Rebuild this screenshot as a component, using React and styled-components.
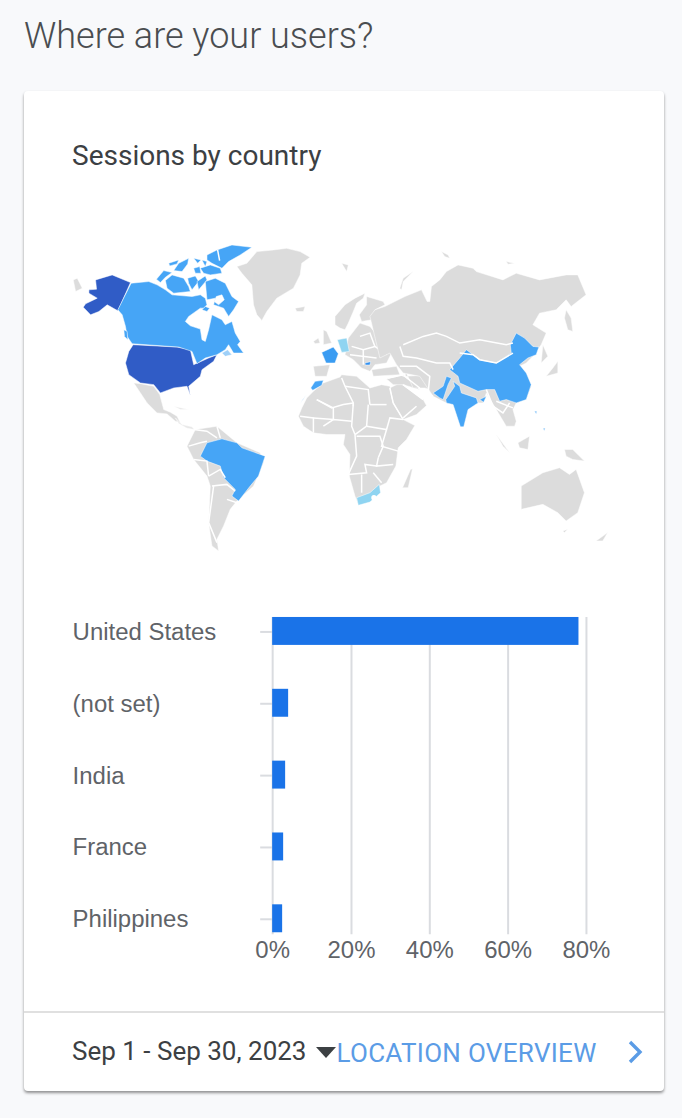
import styled, { createGlobalStyle } from "styled-components";

const Global = createGlobalStyle`
  html, body {
    margin: 0;
    background: #f8f9fb;
  }
`;

const GREY = "#dcdcdc";
const FAINT = "#e8e8e8";
const BLUE = "#46a5f6";
const DARK = "#305cc6";
const LIGHT = "#8fd4f1";
const WHITE = "#fff";

// the map is traced at 3x, each layer has its own origin on the page
const layers = [
  {
    x: 60,
    y: 230,
    shapes: [
      [GREY, "38,150 50,145 65,175 45,185"],
      [DARK, "105,150 155,135 210,158 172,243 140,225 115,245 90,255 68,232 75,222 110,205 85,190 85,180 108,178"],
      [DARK, "218,345 350,352 390,360 400,405 445,385 470,375 460,395 425,420 420,440 385,470 390,498 380,470 340,475 300,490 280,465 240,460 205,435 195,400 205,365"],
      [GREY, "220,460 240,462 280,470 298,495 310,540 330,548 350,560 360,580 345,575 320,553 290,550 260,520 240,490"],
      [FAINT, "345,565 365,585 395,592 402,600 380,596 355,582"],
      [FAINT, "340,530 385,540 360,540"],
      [GREY, "530,110 560,100 590,65 640,60 680,55 720,65 750,82 725,100 720,135 700,175 650,205 620,245 605,272 590,255 580,225 575,165 545,130"],
      [GREY, "705,235 735,230 730,245 710,245"],
      [GREY, "405,600 470,590 530,640 600,670 610,700 580,770 530,815 510,840 490,890 470,930 475,965 455,950 445,880 450,770 440,740 400,690 380,650"],
      [BLUE, "440,640 485,628 530,640 545,655 615,680 595,740 570,770 535,815 515,800 525,780 490,745 480,710 440,695 420,680"],
      [GREY, "760,410 810,405 800,440 765,440"],
      [GREY, "760,335 775,325 780,340 765,342"],
      [GREY, "790,300 800,305 815,340 790,345"],
      ["#3a9cf2", "785,368 820,352 835,372 825,400 798,400"],
    ],
    lines: [
      "385,650 420,640 440,635",
      "400,690 440,695 445,740",
      "445,740 480,720 495,745",
      "455,770 500,765 525,785",
      "460,770 445,880 470,940",
      "500,810 530,820",
      "400,600 440,605 470,625",
      "470,590 480,625",
    ],
  },
  {
    x: 110,
    y: 240,
    shapes: [
      [BLUE, "62,130 115,125 140,135 165,150 185,165 245,170 270,165 285,175 290,195 280,205 270,205 235,230 225,245 240,258 270,268 275,300 285,305 295,270 305,225 335,240 345,255 365,245 375,280 390,305 382,315 400,340 370,340 355,315 345,330 320,345 285,355 260,372 245,335 205,322 65,312 50,290 45,260 35,225 22,210"],
      [BLUE, "290,45 320,30 365,15 425,22 390,45 355,65 335,85 305,70 290,60"],
      [BLUE, "175,70 205,60 200,72 178,78"],
      [BLUE, "205,70 235,55 232,72 215,95 190,92"],
      [BLUE, "250,55 272,60 262,70"],
      [BLUE, "250,85 268,80 272,100 255,100"],
      [BLUE, "275,60 290,65 285,80"],
      [BLUE, "270,85 300,75 330,85 335,100 300,105 280,100"],
      [BLUE, "138,118 160,92 185,98 165,112 150,128"],
      [BLUE, "165,122 185,105 220,115 235,140 240,155 190,160 170,145"],
      [BLUE, "232,115 255,108 265,125 245,150 235,130"],
      [BLUE, "260,125 285,108 290,120 265,150"],
      [BLUE, "285,125 315,115 345,130 365,170 385,185 370,210 355,230 340,205 310,195 315,175 290,180"],
      [BLUE, "285,200 298,205 290,215 275,210"],
      [BLUE, "40,270 50,275 52,300 42,290"],
      [WHITE, "318,170 335,165 342,180 325,195 312,185"],
      ["#9fd0f8", "335,340 352,330 365,345 345,350"],
    ],
    lines: ["322,30 328,62"],
  },
  {
    x: 290,
    y: 320,
    shapes: [
      [GREY, "25,290 35,265 50,235 70,215 100,190 150,172 155,165 200,170 240,205 275,195 300,200 310,250 340,300 375,318 350,360 325,385 318,440 290,490 270,500 270,520 240,545 205,555 195,530 178,470 180,405 160,375 165,345 110,345 70,340 40,320"],
      [GREY, "300,205 330,190 400,240 410,258 380,285 340,300 310,250"],
      [GREY, "245,150 320,140 330,165 250,170"],
      [GREY, "290,178 340,165 390,210 340,195 310,195"],
      [GREY, "345,150 345,170 430,165 440,215 405,205 370,205"],
      [GREY, "335,85 350,120 400,115 450,135 475,150 465,170 430,215 440,165 345,150"],
      [BLUE, "62,205 75,185 100,182 95,197 68,212"],
      [BLUE, "30,252 50,225 38,240"],
      [GREY, "338,505 362,450 368,448 355,505"],
      [LIGHT, "200,535 240,520 268,495 272,520 240,548 205,558"],
    ],
    lines: [
      "155,175 165,200 190,250 190,260",
      "80,240 125,265 160,255 190,250",
      "165,200 235,210 240,255",
      "240,255 290,255",
      "235,255 230,320",
      "190,250 185,320 195,345",
      "80,240 130,265 130,300 70,295",
      "30,290 70,295 70,340",
      "100,320 130,300 185,305",
      "230,320 290,330 300,295 340,300",
      "195,345 230,320",
      "195,345 200,410 175,465",
      "200,350 270,350 280,380 265,415",
      "290,330 275,380 325,395",
      "265,415 260,440 310,435",
      "175,465 230,460 225,435 260,440",
      "215,465 215,520",
      "250,460 275,490",
      "340,300 310,250 300,205",
      "345,170 345,150",
      "380,120 420,130 445,165 430,205",
      "330,165 345,170 390,205",
      "295,175 340,165",
      "340,195 400,240",
      "340,295 380,260",
    ],
    dots: [[252, 535, 8]],
  },
  {
    x: 320,
    y: 240,
    shapes: [
      [GREY, "45,230 75,195 105,175 135,160 130,175 110,190 100,215 85,250 75,270 60,265 45,255"],
      [GREY, "140,170 190,185 195,195 165,210 155,240 125,245 118,225 140,195"],
      [GREY, "65,70 85,75 80,95"],
      [GREY, "240,145 250,115 280,95 250,125 245,150"],
      [GREY, "365,35 385,45 390,55 375,50"],
      [GREY, "85,295 120,250 150,260 215,340 200,370 165,375 150,395 125,385 100,360 75,345"],
    ],
    lines: ["120,290 150,280 165,320 130,330 95,320", "130,330 130,375", "165,320 200,345", "90,345 170,355"],
  },
  {
    x: 340,
    y: 230,
    shapes: [
      [GREY, "90,260 105,240 135,230 195,200 245,180 262,215 270,215 275,170 300,150 320,125 355,105 400,115 410,125 490,150 530,130 600,150 680,135 715,135 740,195 695,230 680,210 650,240 600,250 580,285 620,310 605,345 580,380 560,400 540,410 560,430 575,470 560,510 530,520 520,540 530,575 525,590 500,590 470,540 440,490 430,520 410,520 385,540 372,592 340,525 320,520 280,500 240,440 190,430 170,405 150,370 120,385"],
      [GREY, "680,240 695,265 700,305 685,300 675,265"],
      [GREY, "620,440 640,415 655,395 655,430"],
      [GREY, "610,345 625,380 605,400"],
      [BLUE, "330,420 360,385 380,360 400,375 420,390 470,400 515,370 512,345 530,310 555,325 580,350 598,352 590,375 565,385 540,405 560,430 575,465 560,510 530,520 500,510 480,515 465,480 440,480 415,485 360,460 355,440"],
      [BLUE, "340,455 360,470 365,490 410,505 415,520 385,540 372,592 362,592 340,525 320,520 318,510 345,470"],
      [BLUE, "280,490 310,470 320,440 335,445 325,465 310,510 300,505"],
      [BLUE, "420,510 440,500 432,518"],
      ["#2f8ff0", "75,400 92,396 90,406 76,406"],
      [BLUE, "585,545 592,545 590,553"],
      [BLUE, "611,596 617,596 614,604"],
      [LIGHT, "-8,330 20,325 28,365 5,368"],
      [GREY, "545,770 610,730 660,715 690,735 710,720 735,790 715,850 680,875 655,850 610,825 545,840"],
      [GREY, "770,935 805,910 790,935"],
      [GREY, "670,905 685,900 675,910"],
      [GREY, "535,640 570,620 565,660 540,655"],
      [GREY, "675,660 700,660 735,695 700,690 680,680"],
      [GREY, "470,615 510,670 490,650"],
      [GREY, "500,95 525,100 505,103"],
    ],
    lines: [
      "190,345 250,320 290,310 320,320 360,340 420,330 500,345 520,340",
      "360,370 400,375 420,390 470,400 520,370",
      "180,350 190,380 230,385 290,400 330,400 340,420",
      "180,410 230,410 270,440 265,490 280,500",
      "440,480 460,530 490,550 510,520",
      "470,515 520,535",
    ],
  },
];

const countries = [
  { name: "United States", width: 307, top: 617 },
  { name: "(not set)", width: 16, top: 689 },
  { name: "India", width: 13, top: 761 },
  { name: "France", width: 11, top: 833 },
  { name: "Philippines", width: 10, top: 905 },
];

const axis = [
  { label: "0%", x: 272.5 },
  { label: "20%", x: 351.5 },
  { label: "40%", x: 430 },
  { label: "60%", x: 508.5 },
  { label: "80%", x: 587 },
];

function App() {
  return (
    <Page>
      <Global />
      <Title>Where are your users?</Title>
      <Card>
        <CardTitle>Sessions by country</CardTitle>
        <WorldMap viewBox="60 230 570 330">
          {layers.map((layer) => (
            <g key={layer.x} transform={`translate(${layer.x} ${layer.y}) scale(0.3333)`}>
              {layer.shapes.map(([fill, pts], i) => (
                <polygon key={i} points={pts} fill={fill} stroke="#fff" strokeWidth="1.5" />
              ))}
              {layer.lines.map((pts, i) => (
                <polyline key={i} points={pts} fill="none" stroke="#fff" strokeWidth="4.5" />
              ))}
              {layer.dots?.map(([cx, cy, r]) => (
                <circle key={cx} cx={cx} cy={cy} r={r} fill="#fff" />
              ))}
            </g>
          ))}
        </WorldMap>
        <Chart viewBox="24 605 640 370">
          {axis.map((a) => (
            <line key={a.label} x1={a.x} x2={a.x} y1="617" y2="935" stroke="#dadce0" strokeWidth="2" />
          ))}
          {countries.map((c) => (
            <g key={c.name}>
              <line x1="260" x2="272" y1={c.top + 15} y2={c.top + 15} stroke="#dadce0" strokeWidth="2" />
              <rect x="272" y={c.top} width={c.width} height="28" fill="#1a73e8" />
              <text x="72" y={c.top + 23}>{c.name}</text>
            </g>
          ))}
          {axis.map((a) => (
            <text key={a.label} x={a.x} y="959" textAnchor="middle">{a.label}</text>
          ))}
        </Chart>
        <Footer>
          <DateRange>Sep 1 - Sep 30, 2023</DateRange>
          <Caret />
          <OverviewLink>LOCATION OVERVIEW</OverviewLink>
          <Chevron viewBox="0 0 16 24">
            <polyline points="3,2 13,12 3,22" fill="none" stroke="#5b9ce6" strokeWidth="3.4" />
          </Chevron>
        </Footer>
      </Card>
    </Page>
  );
}

const Page = styled.div`
  height: 1118px;
  box-sizing: border-box;
  padding: 0 18px 0 24px;
  overflow: hidden;
`;

const Title = styled.h1`
  margin: 0;
  height: 91px;
  padding-top: 14px;
  box-sizing: border-box;
  font: 300 36px/44px Roboto, sans-serif;
  color: #4a4d50;
`;

const Card = styled.section`
  height: 1000px;
  background: #fff;
  border-radius: 4px;
  box-shadow: 0 2px 3px rgba(0, 0, 0, 0.42);
  display: flex;
  flex-direction: column;
`;

const CardTitle = styled.h2`
  margin: 0;
  height: 139px;
  padding: 46px 0 0 48px;
  box-sizing: border-box;
  font: 400 28px/38px Roboto, sans-serif;
  color: #3c4043;
`;

const WorldMap = styled.svg`
  display: block;
  width: 570px;
  height: 330px;
  margin-left: 36px;
`;

const Chart = styled.svg`
  display: block;
  width: 640px;
  height: 370px;
  margin-top: 46px;

  text {
    font: 400 24px "Liberation Sans", Arial, sans-serif;
    fill: #5f6368;
  }
`;

const Footer = styled.footer`
  margin-top: 37px;
  height: 78px;
  border-top: 2px solid #e0e0e0;
  display: flex;
  align-items: center;
  padding-left: 48px;
`;

const DateRange = styled.span`
  font: 400 26px/34px Roboto, sans-serif;
  color: #3c4043;
  margin-top: -2px;
`;

const Caret = styled.span`
  width: 0;
  height: 0;
  margin-left: 10px;
  border-left: 10px solid transparent;
  border-right: 10px solid transparent;
  border-top: 11px solid #3c4043;
`;

const OverviewLink = styled.span`
  font: 400 26px/34px Roboto, sans-serif;
  letter-spacing: 0.3px;
  color: #5b9ce6;
  margin-top: 2px;
`;

const Chevron = styled.svg`
  width: 16px;
  height: 24px;
  margin-left: 30px;
`;

export default App;
